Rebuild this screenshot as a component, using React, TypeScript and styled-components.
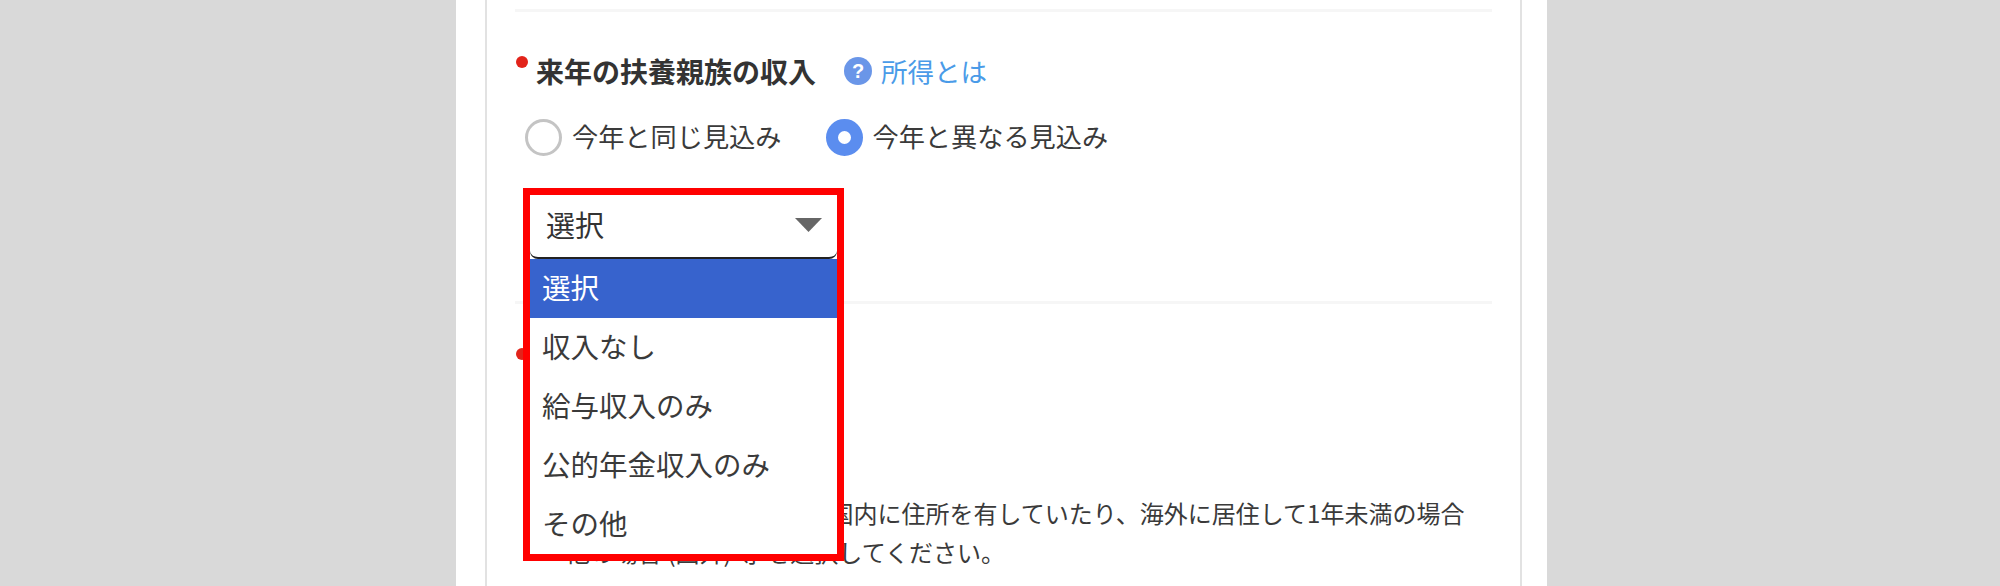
import styled, { createGlobalStyle } from "styled-components";

const GlobalStyle = createGlobalStyle`
  html, body {
    margin: 0;
    padding: 0;
    background: #d9d9d9;
  }
  * {
    box-sizing: border-box;
  }
`;

const options = ["選択", "収入なし", "給与収入のみ", "公的年金収入のみ", "その他"];

export default function App() {
  return (
    <>
      <GlobalStyle />
      <Page>
        <Panel>
          <Card>
            <Divider />
            <Section>
              <LabelRow>
                <RequiredDot />
                <Title>来年の扶養親族の収入</Title>
                <HelpLink>
                  <HelpIcon>?</HelpIcon>
                  所得とは
                </HelpLink>
              </LabelRow>
              <RadioRow>
                <RadioLabel>
                  <Radio />
                  <RadioText>今年と同じ見込み</RadioText>
                </RadioLabel>
                <RadioLabel>
                  <Radio $checked />
                  <RadioText>今年と異なる見込み</RadioText>
                </RadioLabel>
              </RadioRow>
              <SelectWrap>
                <SelectBox>
                  <SelectText>選択</SelectText>
                  <Arrow width="27" height="14" viewBox="0 0 27 14">
                    <polygon points="0,0 27,0 13.5,14" fill="#666666" />
                  </Arrow>
                </SelectBox>
                <OptionList>
                  {options.map((o, i) => (
                    <Option key={o} $active={i === 0}>
                      {o}
                    </Option>
                  ))}
                </OptionList>
                <Highlight />
              </SelectWrap>
            </Section>
            <Divider />
            <Section>
              <RequiredDot />
              <Note>
                対象の扶養親族が、日本国内に住所を有していたり、海外に居住して1年未満の場合
                <br />
                他の場合 (国外) 等 を選択してください。
              </Note>
            </Section>
          </Card>
        </Panel>
      </Page>
    </>
  );
}

const Page = styled.div`
  display: flex;
  justify-content: center;
  width: 2000px;
  height: 586px;
  padding-left: 3px;
  overflow: hidden;
  font-family: "Noto Sans CJK JP", "Noto Sans", sans-serif;
  color: #3a3a3a;
`;
const Panel = styled.div`
  width: 1091px;
  height: 586px;
  padding: 0 25px 0 29px;
  background: #ffffff;
`;
const Card = styled.div`
  height: 586px;
  padding: 9px 28px 0;
  border-left: 2px solid #e2e2e2;
  border-right: 2px solid #e2e2e2;
`;
const Divider = styled.div`
  height: 3px;
  background: #f6f6f6;
`;
const Section = styled.div`
  padding-top: 44px;
  padding-bottom: 42px;
`;
const LabelRow = styled.div`
  display: flex;
  align-items: flex-start;
  height: 34px;
`;
const RequiredDot = styled.span`
  display: block;
  flex: none;
  width: 12px;
  height: 12px;
  margin-left: 1px;
  margin-right: 8px;
  border-radius: 50%;
  background: #e2231a;
`;
const Title = styled.span`
  margin-top: -2px;
  font-size: 28px;
  font-weight: 700;
  line-height: 34px;
  color: #333333;
`;
const HelpLink = styled.a`
  display: flex;
  align-items: center;
  gap: 9px;
  margin-top: -1px;
  margin-left: 28px;
  font-size: 26.5px;
  line-height: 32px;
  color: #4a9be8;
`;
const HelpIcon = styled.span`
  display: flex;
  justify-content: center;
  align-items: center;
  width: 28px;
  height: 28px;
  border-radius: 50%;
  background: #6a96e8;
  color: #ffffff;
  font-family: "Liberation Sans", sans-serif;
  font-size: 20px;
  font-weight: 700;
`;
const RadioRow = styled.div`
  display: flex;
  gap: 44px;
  margin-top: 29px;
  padding-left: 10px;
`;
const RadioLabel = styled.label`
  display: flex;
  align-items: center;
  gap: 10px;
  height: 37px;
`;
const RadioText = styled.span`
  padding-bottom: 3px;
  font-size: 26.2px;
  line-height: 34px;
`;
const Radio = styled.span<{ $checked?: boolean }>`
  flex: none;
  width: 37px;
  height: 37px;
  border-radius: 50%;
  border: ${(p) => (p.$checked ? "12.5px solid #5b8def" : "3px solid #c4c4c4")};
  background: #ffffff;
`;
const SelectWrap = styled.div`
  position: relative;
  width: 307px;
  margin-top: 39px;
  margin-left: 15px;
`;
const SelectBox = styled.div`
  display: flex;
  justify-content: space-between;
  align-items: center;
  height: 64px;
  padding: 0 15px 3px 16px;
  border-bottom: 2px solid #222222;
  border-radius: 8px;
  background: #ffffff;
  color: #333333;
`;
const SelectText = styled.span`
  padding-bottom: 2px;
  font-size: 29px;
  line-height: 40px;
`;
const Arrow = styled.svg`
  display: block;
`;
const OptionList = styled.ul`
  position: absolute;
  top: 100%;
  left: 0;
  z-index: 2;
  width: 100%;
  margin: 0;
  padding: 0;
  list-style: none;
  background: #ffffff;
`;
const Option = styled.li<{ $active?: boolean }>`
  height: 59px;
  padding-left: 12px;
  padding-bottom: 4px;
  font-size: 28.5px;
  line-height: 55px;
  background: ${(p) => (p.$active ? "#3763cd" : "#ffffff")};
  color: ${(p) => (p.$active ? "#ffffff" : "#3a3a3a")};
`;
const Highlight = styled.div`
  position: absolute;
  top: -7px;
  left: -7px;
  z-index: 3;
  width: 321px;
  height: 373px;
  border: 7px solid #ff0000;
  pointer-events: none;
`;
const Note = styled.p`
  margin: 133px 0 0 51px;
  font-size: 24px;
  line-height: 39px;
  white-space: nowrap;
  color: #3a3a3a;
`;
